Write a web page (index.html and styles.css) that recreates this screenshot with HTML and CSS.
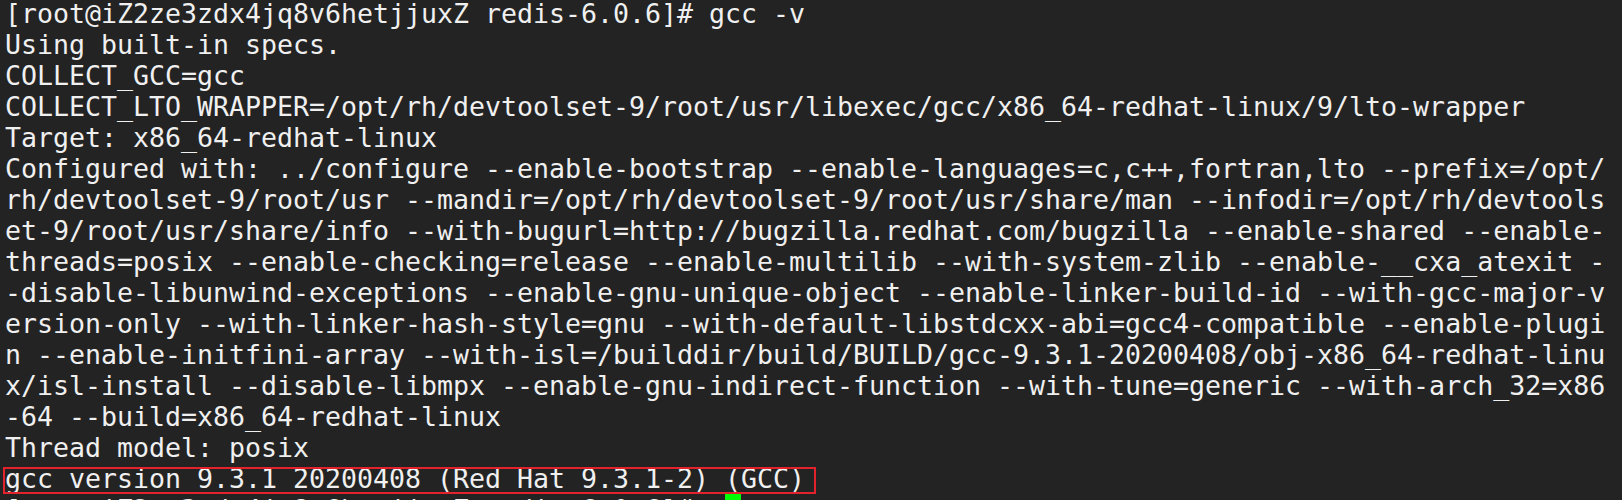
FILE: index.html
```html
<!DOCTYPE html>
<html lang="en">
<head>
<meta charset="utf-8">
<title>gcc -v</title>
<link rel="stylesheet" href="styles.css">
</head>
<body>
<main class="screen">
<pre class="term">[root@iZ2ze3zdx4jq8v6hetjjuxZ redis-6.0.6]# gcc -v
Using built-in specs.
COLLECT_GCC=gcc
COLLECT_LTO_WRAPPER=/opt/rh/devtoolset-9/root/usr/libexec/gcc/x86_64-redhat-linux/9/lto-wrapper
Target: x86_64-redhat-linux
Configured with: ../configure --enable-bootstrap --enable-languages=c,c++,fortran,lto --prefix=/opt/
rh/devtoolset-9/root/usr --mandir=/opt/rh/devtoolset-9/root/usr/share/man --infodir=/opt/rh/devtools
et-9/root/usr/share/info --with-bugurl=http://bugzilla.redhat.com/bugzilla --enable-shared --enable-
threads=posix --enable-checking=release --enable-multilib --with-system-zlib --enable-__cxa_atexit -
-disable-libunwind-exceptions --enable-gnu-unique-object --enable-linker-build-id --with-gcc-major-v
ersion-only --with-linker-hash-style=gnu --with-default-libstdcxx-abi=gcc4-compatible --enable-plugi
n --enable-initfini-array --with-isl=/builddir/build/BUILD/gcc-9.3.1-20200408/obj-x86_64-redhat-linu
x/isl-install --disable-libmpx --enable-gnu-indirect-function --with-tune=generic --with-arch_32=x86
-64 --build=x86_64-redhat-linux
Thread model: posix
gcc version 9.3.1 20200408 (Red Hat 9.3.1-2) (GCC)
[root@iZ2ze3zdx4jq8v6hetjjuxZ redis-6.0.6]#  <span class="cursor"> </span></pre>
<div class="highlight"></div>
</main>
</body>
</html>
```

FILE: styles.css
```css
html, body {
  margin: 0;
  padding: 0;
  background: #232323;
}

.screen {
  position: relative;
  width: 1622px;
  height: 500px;
  overflow: hidden;
  background: #232323;
}

.term {
  margin: -2px 0 0 0;
  padding: 0 0 0 5px;
  font-family: "DejaVu Sans Mono", monospace;
  font-size: 26.58px;
  line-height: 31px;
  color: #f0f0f0;
  white-space: pre;
}

.cursor {
  background: #00ff00;
}

.highlight {
  position: absolute;
  left: 3px;
  top: 467px;
  width: 813px;
  height: 27px;
  box-sizing: border-box;
  border: 2px solid #e4222b;
}
```
